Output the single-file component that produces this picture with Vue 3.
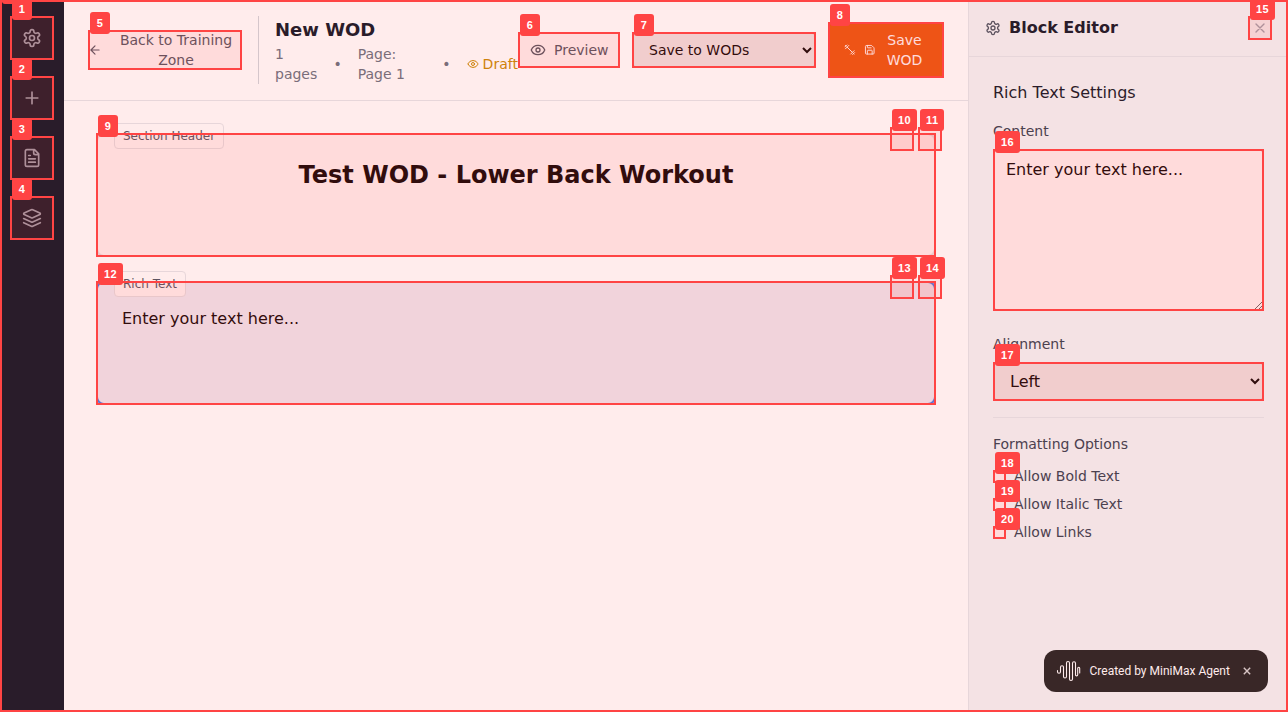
<script setup>
const marks = [
  [0, 0, 1288, 712],
  [10, 16, 44, 44],
  [10, 76, 44, 44],
  [10, 136, 44, 44],
  [10, 196, 44, 44],
  [88, 30, 154, 40],
  [518, 32, 102, 36],
  [632, 32, 184, 36],
  [828, 22, 116, 56],
  [96, 133, 840, 124],
  [890, 127, 24, 24],
  [918, 127, 24, 24],
  [96, 281, 840, 124],
  [890, 275, 24, 24],
  [918, 275, 24, 24],
  [1248, 16, 24, 24],
  [993, 149, 271, 162],
  [993, 362, 271, 39],
  [993, 470, 13, 13],
  [993, 498, 13, 13],
  [993, 526, 13, 13],
]
const place = ([x, y, w, h]) => ({ left: x + 'px', top: y + 'px', width: w + 'px', height: h + 'px' })
const options = ['Allow Bold Text', 'Allow Italic Text', 'Allow Links']
const gear = 'M12.22 2h-.44a2 2 0 0 0-2 2v.18a2 2 0 0 1-1 1.73l-.43.25a2 2 0 0 1-2 0l-.15-.08a2 2 0 0 0-2.73.73l-.22.38a2 2 0 0 0 .73 2.73l.15.1a2 2 0 0 1 1 1.72v.51a2 2 0 0 1-1 1.74l-.15.09a2 2 0 0 0-.73 2.73l.22.38a2 2 0 0 0 2.73.73l.15-.08a2 2 0 0 1 2 0l.43.25a2 2 0 0 1 1 1.73V20a2 2 0 0 0 2 2h.44a2 2 0 0 0 2-2v-.18a2 2 0 0 1 1-1.73l.43-.25a2 2 0 0 1 2 0l.15.08a2 2 0 0 0 2.73-.73l.22-.39a2 2 0 0 0-.73-2.73l-.15-.08a2 2 0 0 1-1-1.74v-.5a2 2 0 0 1 1-1.74l.15-.09a2 2 0 0 0 .73-2.73l-.22-.38a2 2 0 0 0-2.73-.73l-.15.08a2 2 0 0 1-2 0l-.43-.25a2 2 0 0 1-1-1.73V4a2 2 0 0 0-2-2z M15 12a3 3 0 1 1-6 0a3 3 0 0 1 6 0z'
const eye = 'M2.062 12.348a1 1 0 0 1 0-.696 10.75 10.75 0 0 1 19.876 0 1 1 0 0 1 0 .696 10.75 10.75 0 0 1-19.876 0 M15 12a3 3 0 1 1-6 0a3 3 0 0 1 6 0z'
const tools = [
  gear,
  'M5 12h14 M12 5v14',
  'M15 2H6a2 2 0 0 0-2 2v16a2 2 0 0 0 2 2h12a2 2 0 0 0 2-2V7z M14 2v4a2 2 0 0 0 2 2h4 M10 9H8 M16 13H8 M16 17H8',
  'M12.83 2.18a2 2 0 0 0-1.66 0L2.6 6.08a1 1 0 0 0 0 1.83l8.58 3.91a2 2 0 0 0 1.66 0l8.58-3.9a1 1 0 0 0 0-1.83Z M22 17.65l-9.17 4.16a2 2 0 0 1-1.66 0L2 17.65 M22 12.65l-9.17 4.16a2 2 0 0 1-1.66 0L2 12.65',
]
</script>

<template>
  <div class="screen">
    <nav class="rail">
      <button v-for="(d, i) in tools" :key="i" class="tool">
        <svg class="icon s20" viewBox="0 0 24 24"><path :d="d" /></svg>
      </button>
    </nav>

    <main class="main">
      <header class="top">
        <button class="back">
          <svg class="icon s14" viewBox="0 0 24 24"><path d="M12 19l-7-7 7-7 M19 12H5" /></svg>
          <span>Back to Training Zone</span>
        </button>
        <div class="info">
          <h1>New WOD</h1>
          <div class="meta">
            <span class="pages">1 pages</span>
            <span>•</span>
            <span class="page">Page: Page 1</span>
            <span>•</span>
            <span class="draft">
              <svg class="icon s12" viewBox="0 0 24 24"><path :d="eye" /></svg>Draft
            </span>
          </div>
        </div>
        <div class="actions">
          <button class="preview">
            <svg class="icon s16" viewBox="0 0 24 24"><path :d="eye" /></svg>Preview
          </button>
          <select class="target"><option>Save to WODs</option></select>
          <button class="save">
            <svg class="icon s11" viewBox="0 0 24 24"><path d="M6.5 6.5l11 11 M21 21l-1-1 M3 3l1 1 M18 22l4-4 M2 6l4-4 M3 10l7-7 M14 21l7-7" /></svg>
            <svg class="icon s11" viewBox="0 0 24 24"><path d="M15.2 3a2 2 0 0 1 1.4.6l3.8 3.8a2 2 0 0 1 .6 1.4V19a2 2 0 0 1-2 2H5a2 2 0 0 1-2-2V5a2 2 0 0 1 2-2z M17 21v-7a1 1 0 0 0-1-1H8a1 1 0 0 0-1 1v7 M7 3v4a1 1 0 0 0 1 1h7" /></svg>
            <span>Save WOD</span>
          </button>
        </div>
      </header>
      <section class="canvas">
        <article class="block">
          <span class="tag">Section Header</span>
          <h2>Test WOD - Lower Back Workout</h2>
        </article>
        <article class="block selected">
          <span class="tag">Rich Text</span>
          <p>Enter your text here...</p>
        </article>
      </section>
    </main>

    <aside class="panel">
      <div class="panel-head">
        <svg class="icon s16" viewBox="0 0 24 24"><path :d="gear" /></svg>
        <h3>Block Editor</h3>
        <button class="close"><svg class="icon s16" viewBox="0 0 24 24"><path d="M18 6 6 18 M6 6l12 12" /></svg></button>
      </div>
      <div class="panel-body">
        <h4>Rich Text Settings</h4>
        <label class="field">Content</label>
        <textarea spellcheck="false" value="Enter your text here..."></textarea>
        <label class="field second">Alignment</label>
        <select class="align"><option>Left</option></select>
        <div class="formatting">
          <div class="field">Formatting Options</div>
          <label v-for="o in options" :key="o" class="check"><input type="checkbox" />{{ o }}</label>
        </div>
      </div>
    </aside>

    <div class="toast">
      <svg class="wave" viewBox="0 0 24 22"><path d="M1 10.5v1.2a1.5 1.5 0 0 0 3 0V7.2a1.5 1.5 0 0 1 3 0v9.3a1.5 1.5 0 0 0 3 0V3a1.5 1.5 0 0 1 3 0v11 M13 5v14a1.5 1.5 0 0 0 3 0V3.2a1.5 1.5 0 0 1 3 0v11.6a1.1 1.1 0 0 0 2.2 0V8.3a1 1 0 0 1 2 0V13" /></svg>
      <span>Created by MiniMax Agent</span>
      <svg class="dismiss" viewBox="0 0 8 8"><path d="M.8.8l6.4 6.4M7.2.8.8 7.2" /></svg>
    </div>

    <div v-for="(m, i) in marks" :key="i" class="mark" :style="place(m)">
      <b>{{ i }}</b>
    </div>
  </div>
</template>

<style>
html, body { margin: 0; overflow: hidden; background: #fff; }
</style>

<style scoped>
* { box-sizing: border-box; }
.screen {
  position: relative; display: flex; width: 1288px; height: 712px; overflow: hidden;
  font: 14px/20px "DejaVu Sans", sans-serif; color: #111827; background: #fff;
}
h1, h2, h3, h4, p { margin: 0; }
button { border: 0; padding: 0; background: none; font: inherit; color: inherit; }
.icon { display: block; flex: none; fill: none; stroke: currentColor; stroke-width: 2; stroke-linecap: round; stroke-linejoin: round; }
.s20 { width: 20px; height: 20px; }
.s16 { width: 16px; height: 16px; }
.s14 { width: 14px; height: 14px; }
.s12 { width: 12px; height: 12px; }
.s11 { width: 11px; height: 11px; }
.rail { width: 64px; background: #111827; display: flex; flex-direction: column; align-items: center; gap: 16px; padding-top: 16px; }
.tool { width: 44px; height: 44px; display: grid; place-items: center; color: #9ca3af; }
.main { width: 904px; }
.top { height: 101px; padding: 16px 24px; display: flex; align-items: center; border-bottom: 1px solid #e5e7eb; }
.back { width: 154px; display: flex; align-items: center; gap: 8px; color: #4b5563; }
.back span { flex: 1; }
.info { width: 260px; flex: none; margin-left: 16px; padding-left: 16px; border-left: 1px solid #d1d5db; }
h1 { font-size: 18px; line-height: 28px; font-weight: 700; }
.meta { display: flex; align-items: center; gap: 16px; color: #6b7280; }
.pages { width: 42.4px; flex: none; }
.page { width: 68.7px; flex: none; }
.draft { display: flex; align-items: center; gap: 4px; color: #ca8a04; flex: none; }
.actions { display: flex; align-items: center; gap: 12px; flex: none; }
.preview { width: 102px; height: 36px; padding: 0 12px; display: flex; align-items: center; gap: 8px; color: #4b5563; }
select { border: 1px solid #d1d5db; border-radius: 6px; background: #efefef; color: #000; font-family: inherit; padding: 0 12px; }
.target { width: 184px; height: 36px; font-size: 14px; }
.save { width: 116px; height: 56px; padding: 0 16px; display: flex; align-items: center; gap: 8px; background: #ea580c; color: #fff; border-radius: 4px; }
.save .icon { width: 11.5px; height: 11.5px; }
.save span { flex: 1; margin-left: -2px; }
.canvas { padding: 32px; display: flex; flex-direction: column; gap: 24px; }
.block { position: relative; height: 124px; padding: 24px; border: 2px solid #e5e7eb; border-radius: 8px; color: #000; background: #fff; }
.selected { border-color: #3b82f6; background: #eff6ff; }
.tag { position: absolute; left: 16px; top: -12px; height: 26px; padding: 4px 8px; border: 1px solid #e5e7eb; border-radius: 4px; background: #fff; color: #4b5563; font-size: 12px; line-height: 16px; white-space: nowrap; }
h2 { font-size: 24px; line-height: 32px; text-align: center; }
.block p { font-size: 16px; line-height: 24px; }
.panel { width: 320px; background: #f3f4f6; border-left: 1px solid #e5e7eb; }
.panel-head { height: 57px; padding: 0 16px; display: flex; align-items: center; gap: 8px; border-bottom: 1px solid #e5e7eb; color: #4b5563; }
.panel-head h3 { flex: 1; font-size: 16px; line-height: 24px; color: #111827; }
.close { padding: 4px; color: #9ca3af; }
.panel-body { padding: 24px; }
h4 { font-size: 16px; line-height: 24px; font-weight: 400; margin-bottom: 16px; }
.field { display: block; color: #374151; margin-bottom: 8px; }
.second { margin-top: 23px; }
textarea { display: block; width: 271px; height: 162px; padding: 8px 12px; border: 1px solid #d1d5db; border-radius: 6px; font: 16px/24px "DejaVu Sans", sans-serif; color: #000; background: #fff; resize: vertical; }
.align { display: block; width: 271px; height: 39px; font-size: 16px; }
.formatting { margin-top: 16px; padding-top: 16px; border-top: 1px solid #e5e7eb; }
.formatting .field { margin-bottom: 12px; }
.check { display: flex; align-items: center; gap: 8px; margin-bottom: 8px; color: #374151; }
.check input { margin: 0; width: 13px; height: 13px; }
.toast { position: absolute; left: 1044px; top: 650px; width: 224px; height: 42px; padding-left: 12px; display: flex; align-items: center; border-radius: 12px; background: #232424; color: #fff; font: 400 12px/18px Roboto, sans-serif; white-space: nowrap; }
.wave { width: 25px; height: 22px; margin-right: 8.5px; flex: none; fill: none; stroke: #fff; stroke-width: 1.1; stroke-linecap: round; }
.dismiss { position: absolute; left: 199px; top: 17px; width: 8px; height: 8px; fill: none; stroke: #d4d4d4; stroke-width: 1.4; }
.mark { position: absolute; border: 2px solid #f44; background: rgba(255, 68, 68, 0.1); }
.mark b { position: absolute; left: 0; top: -20px; min-width: 20px; height: 22px; padding: 0 6px; border-radius: 3px; background: #f44; color: #fff; font: bold 11px/23px "Liberation Sans", sans-serif; letter-spacing: 0.4px; text-align: center; }
</style>
